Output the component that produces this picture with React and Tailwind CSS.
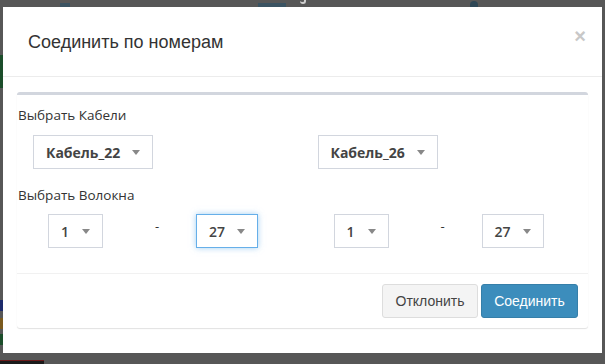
import React from "react";

const sans = { fontFamily: '"Liberation Sans", Arial, sans-serif' };

function Arrow() {
  return (
    <svg width="8" height="5" viewBox="0 0 8 5" className="shrink-0">
      <path d="M0 0 L8 0 L4 5 Z" fill="#888888" />
    </svg>
  );
}

function Select({ value, width, bold, focus }) {
  return (
    <div
      className={
        "h-[34px] flex items-center justify-between pl-[12px] pr-[12px] bg-white border " +
        (focus
          ? "border-[#66afe9] shadow-[0_0_6px_rgba(102,175,233,0.6)]"
          : "border-[#d2d6de]") +
        " " +
        width
      }
    >
      <span
        className={
          "text-[14px] text-[#444] font-['Open_Sans',sans-serif] " +
          (bold ? "font-bold" : "font-semibold")
        }
      >
        {value}
      </span>
      <Arrow />
    </div>
  );
}

function FiberRange({ from, to, focusTo }) {
  return (
    <div className="flex items-start pl-[31px]">
      <Select value={from} width="w-[55px]" />
      <div className="w-[93px] pl-[52px] mt-[3px] text-[13px] text-[#333] font-['Open_Sans',sans-serif]">
        -
      </div>
      <Select value={to} width="w-[62px]" focus={focusTo} />
    </div>
  );
}

export default function App() {
  return (
    <div className="relative w-[605px] h-[364px] overflow-hidden bg-[#575757] pt-[7px] pl-[3px]">
      {/* page behind the overlay */}
      <div className="absolute left-0 top-[55px] w-[3px] h-[33px] bg-[#1b4d2a]" />
      <div className="absolute left-0 top-[300px] w-[3px] h-[11px] bg-[#1c2a6b]" />
      <div className="absolute left-0 top-[318px] w-[3px] h-[11px] bg-[#7a5a1e]" />
      <div className="absolute left-0 top-[334px] w-[3px] h-[11px] bg-[#1b4d2a]" />
      <div className="absolute left-0 top-[360px] w-[44px] h-[4px] bg-[#1a1a1a] border-t border-[#6b1a1a]" />
      <div className="absolute left-[60px] top-[3px] w-[10px] h-[4px] bg-[#3a5362]" />
      <div className="absolute left-[258px] top-[3px] w-[28px] h-[4px] bg-[#3a5362]" />
      <div className="absolute left-[300px] top-0 w-[6px] h-[4px] rounded-b-full border-b-2 border-r-2 border-[#cfcfcf]" />
      <div className="absolute left-[470px] top-[1px] w-[8px] h-[6px] rounded-t-full bg-[#2f4756]" />

      <div className="relative w-[599px] h-[346px] bg-white flex flex-col">
        <div className="h-[70px] shrink-0 border-b border-[#ececec] flex items-start justify-between pl-[25px] pr-[16px] pt-[22px]">
          <h4 className="text-[18px] leading-[26px] text-[#333]" style={sans}>
            Соединить по номерам
          </h4>
          <span className="text-[20px] leading-none font-bold text-[#c8c8c8] -mt-[3px]" style={sans}>
            ×
          </span>
        </div>

        <div className="px-[14px] pt-[15px]">
          <div className="border-t-[3px] border-[#d2d6de] rounded-[3px] bg-white shadow-[0_1px_1px_rgba(0,0,0,0.12)]">
            <div className="pt-[10px] pb-[25px] font-['Open_Sans',sans-serif]">
              <div className="pl-[1px] text-[13.5px] leading-[20px] text-[#333]">Выбрать Кабели</div>
              <div className="grid grid-cols-2 mt-[10px]">
                <div className="pl-[16px]">
                  <Select value="Кабель_22" width="w-[120px]" bold />
                </div>
                <div className="pl-[15px]">
                  <Select value="Кабель_26" width="w-[120px]" bold />
                </div>
              </div>
              <div className="pl-[1px] mt-[16px] text-[13.5px] leading-[20px] text-[#333]">Выбрать Волокна</div>
              <div className="grid grid-cols-2 mt-[9px]">
                <FiberRange from="1" to="27" focusTo />
                <FiberRange from="1" to="27" />
              </div>
            </div>
            <div className="border-t border-[#f1f1f1] flex justify-end gap-[3px] pt-[10px] pb-[10px] pr-[10px]">
              <button
                className="w-[96px] h-[34px] rounded-[3px] border border-[#dddddd] bg-[#f4f4f4] text-[14px] text-[#444]"
                style={sans}
              >
                Отклонить
              </button>
              <button
                className="w-[97px] h-[34px] rounded-[3px] border border-[#367fa9] bg-[#3c8dbc] text-[14px] text-white"
                style={sans}
              >
                Соединить
              </button>
            </div>
          </div>
        </div>
      </div>
    </div>
  );
}
